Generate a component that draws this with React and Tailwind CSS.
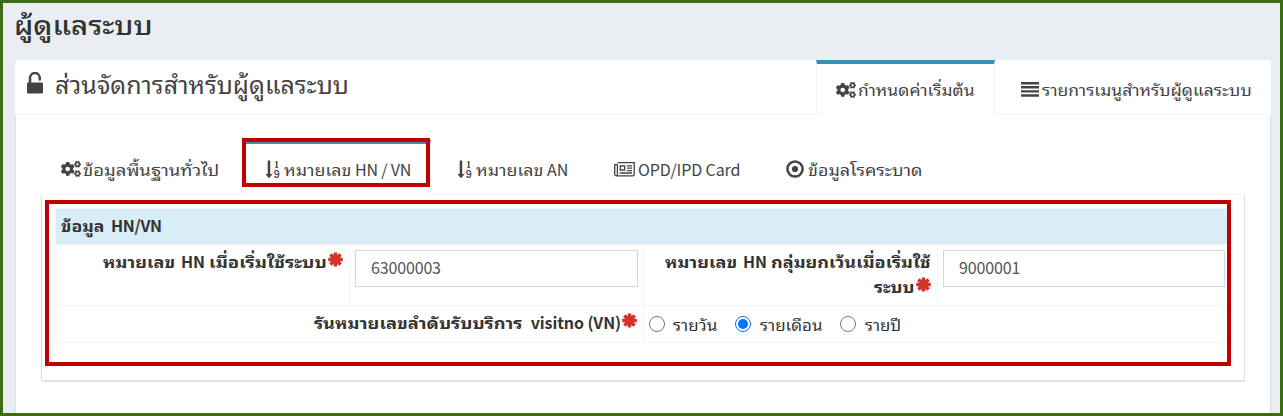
import React from "react";
import { FaCogs } from "react-icons/fa";

const UnlockIcon = () => (
  <svg className="h-[22px] w-[17px] shrink-0" viewBox="0 0 17 22" fill="#444">
    <rect x="0" y="10.4" width="16" height="11" rx="1" />
    <path d="M3 11.5V6a4.9 4.9 0 0 1 9.8 0V7.6" fill="none" stroke="#444" strokeWidth="2.5" strokeLinecap="round" />
  </svg>
);

const SortIcon = () => (
  <svg className="h-[19px] w-[16px] shrink-0" viewBox="0 0 16 19" fill="#444">
    <rect x="2.7" y="0.5" width="2.5" height="14" />
    <path d="M0.4 14h7.2L4 18.2z" />
    <text x="9" y="8.3" fontSize="10" fontWeight="700" fontFamily="Liberation Serif, serif">1</text>
    <text x="8.8" y="18.3" fontSize="10.5" fontFamily="Liberation Sans, sans-serif" stroke="#444" strokeWidth="0.3">9</text>
  </svg>
);

const BarsIcon = () => (
  <svg className="h-[15px] w-[18px] shrink-0" viewBox="0 0 18 15" fill="#444">
    <path d="M0 0h18v2.4H0zM0 4.1h18v2.4H0zM0 8.2h18v2.4H0zM0 12.3h18v2.4H0z" />
  </svg>
);

const CardIcon = () => (
  <svg className="h-[15px] w-[21px] shrink-0" viewBox="0 0 21 15" fill="none" stroke="#444" strokeWidth="1.3">
    <path d="M3.4 0.7h16.8v11.5a1.6 1.6 0 0 1-1.6 1.6H2.2a1.6 1.6 0 0 1-1.5-1.6V2.7h2.7v9.5a1.5 1.5 0 0 1-1.2 1.5" />
    <path d="M6.2 4h4.5v4H6.2zM13 3.8h5M13 6.2h5M13 8.6h5M5.6 11h12.4" />
  </svg>
);

const DotIcon = () => (
  <svg className="h-[18px] w-[18px] shrink-0" viewBox="0 0 18 18" fill="#444">
    <circle cx="9" cy="9" r="7.6" fill="none" stroke="#444" strokeWidth="2.5" />
    <circle cx="9" cy="9" r="3.1" />
  </svg>
);

const Required = () => (
  <svg className="mt-[3px] ml-px h-[15px] w-[15px] shrink-0" viewBox="-7.5 -7.5 15 15" stroke="#d2322d" strokeWidth="3.5">
    <path d="M0-7V7M-7.3 0H7.3M-5.1-5.1L5.1 5.1M5.1-5.1L-5.1 5.1" />
  </svg>
);

const Radio = ({ checked }) => (
  <span className={checked
    ? "flex size-4 items-center justify-center rounded-full border border-[#0075ff] bg-white"
    : "flex size-4 rounded-full border border-[#767676] bg-white"}>
    {checked && <span className="size-2.5 rounded-full bg-[#0075ff]" />}
  </span>
);

// Widened Thai run; the width class sets the space it takes on the line.
const Thai = ({ className, children }) => (
  <span className={"inline-block origin-left " + className}>{children}</span>
);

export default function App() {
  return (
    <div className="relative h-[416px] w-[1283px] overflow-hidden border-[3px] border-[#3f6b17] bg-[#eaeef3] pl-3 font-['Noto_Sans_CJK_JP','Noto_Sans_Thai_Looped','Loma','Waree','Noto_Sans_Thai','Noto_Sans',sans-serif] text-[16px] whitespace-nowrap text-[#444]">
      <h1 className="-ml-px h-[57px] pt-[3px] text-[26px] leading-[36px] font-medium text-[#333]"><Thai className="scale-x-[1.13]">ผู้ดูแลระบบ</Thai></h1>
      <section className="h-[370px] w-[1256px] rounded-t-[3px] bg-white">
        <header className="flex h-[55px] border-b border-[#f4f4f4]">
          <div className="flex w-[801px] pt-[7px] pl-3 text-[24px] leading-[34px]">
            <div className="w-7 pt-[5px]"><UnlockIcon /></div>
            <h2><Thai className="scale-x-[1.04]">ส่วนจัดการสำหรับผู้ดูแลระบบ</Thai></h2>
          </div>
          <div className="flex h-[55px] w-[179px] border-x border-t-4 border-x-[#f4f4f4] border-t-[#3c8dbc] bg-white pl-[19px] leading-[50px]">
            <div className="flex w-[22px] items-center"><FaCogs size={20} /></div><Thai className="scale-x-[1.09]">กำหนดค่าเริ่มต้น</Thai>
          </div>
          <div className="flex pt-1 pl-[26px] leading-[50px]">
            <div className="flex w-[21px] items-center"><BarsIcon /></div><Thai className="w-[209px] scale-x-[1.09]">รายการเมนูสำหรับผู้ดูแลระบบ</Thai>
          </div>
        </header>
        <div className="h-[315px] border-x border-[#dedede] px-[25px] pt-[25px]">
          <div className="h-[241px] w-[1204px] rounded-[3px] shadow-[0_1px_1px_rgba(0,0,0,0.12)]">
            <nav className="flex h-[55px] border-b border-[#f4f4f4] leading-[50px]">
              <div className="flex w-[204px] pt-1 pl-5">
                <div className="flex w-[22px] items-center"><FaCogs size={20} /></div><Thai className="w-[135px] scale-x-[1.155]">ข้อมูลพื้นฐานทั่วไป</Thai>
              </div>
              <div className="flex h-[55px] w-[186px] border-x border-t-4 border-x-[#f4f4f4] border-t-[#3c8dbc] bg-white pl-[19px]">
                <div className="flex w-[19px] items-center"><SortIcon /></div><Thai className="w-[71px] scale-x-[1.11]">หมายเลข</Thai><span className="tracking-[-0.2px]">HN / VN</span>
              </div>
              <div className="flex w-[163px] pt-1 pl-[26px]">
                <div className="flex w-[19px] items-center"><SortIcon /></div><Thai className="w-[71px] scale-x-[1.11]">หมายเลข</Thai>AN
              </div>
              <div className="flex w-[172px] pt-1 pl-5">
                <div className="flex w-[24px] items-center"><CardIcon /></div><span className="tracking-[-0.1px]">OPD/IPD Card</span>
              </div>
              <div className="flex pt-1 pl-5">
                <div className="flex w-[22px] items-center"><DotIcon /></div><Thai className="scale-x-[1.12]">ข้อมูลโรคระบาด</Thai>
              </div>
            </nav>
            <div className="h-[186px] border-x border-b border-[#dedede] pt-[13px] pl-[13px]">
              <div className="grid w-[1176px] grid-cols-[294px_294px_294px_293px] border-t border-l border-[#f4f4f4] leading-[25px] text-[#333]">
                <div className="col-span-4 h-9 border-b border-[#f4f4f4] bg-[#d9edf7] pt-1 pl-[5px] font-bold"><Thai className="w-[50px] scale-x-[1.1]">ข้อมูล</Thai><span className="tracking-[-0.3px]">HN/VN</span></div>
                <div className="flex h-[61px] justify-end border-r border-b border-[#f4f4f4] pt-1 pr-[6px] font-bold"><Thai className="w-[78px] scale-x-[1.13]">หมายเลข</Thai><span className="w-[28px]">HN</span><Thai className="w-[118px] scale-x-[1.155]">เมื่อเริ่มใช้ระบบ</Thai><Required /></div>
                <div className="border-r border-b border-[#f4f4f4] p-[5px]"><div className="h-[37px] border border-[#d2d6de] pl-[15px] leading-[33px] tracking-[-0.15px] text-[#555]">63000003</div></div>
                <div className="flex flex-col items-end border-r border-b border-[#f4f4f4] pt-1 pr-[5px] font-bold"><span className="flex"><Thai className="w-[78px] scale-x-[1.13]">หมายเลข</Thai><span className="w-[28px]">HN</span><Thai className="w-[161px] scale-x-[1.13]">กลุ่มยกเว้นเมื่อเริ่มใช้</Thai></span><span className="flex pr-px"><Thai className="w-[41px] scale-x-[1.12]">ระบบ</Thai><Required /></span></div>
                <div className="border-b border-[#f4f4f4] p-[5px]"><div className="h-[37px] w-[282px] border border-[#d2d6de] pl-[15px] leading-[33px] tracking-[-0.15px] text-[#555]">9000001</div></div>
                <div className="col-span-2 flex h-[37px] justify-end border-r border-b border-[#f4f4f4] pt-1 pr-[6px] font-bold"><Thai className="w-[217px] scale-x-[1.14]">รันหมายเลขลำดับรับบริการ</Thai><span className="tracking-[-0.1px]">visitno (VN)</span><Required /></div>
                <div className="col-span-2 flex items-center border-b border-[#f4f4f4] pl-[5px]">
                  <Radio /><span className="w-[70px] pl-2"><Thai className="scale-x-[1.06]">รายวัน</Thai></span>
                  <Radio checked /><span className="w-[89px] pl-[9px]"><Thai className="scale-x-[1.06]">รายเดือน</Thai></span>
                  <Radio /><span className="pl-[9px]"><Thai className="scale-x-[1.05]">รายปี</Thai></span>
                </div>
              </div>
            </div>
          </div>
        </div>
      </section>
      <div className="absolute top-[135px] left-[239px] h-[49px] w-[188px] border-4 border-[#c00000]" />
      <div className="absolute top-[197px] left-[42px] h-[166px] w-[1186px] border-4 border-[#c00000]" />
    </div>
  );
}
